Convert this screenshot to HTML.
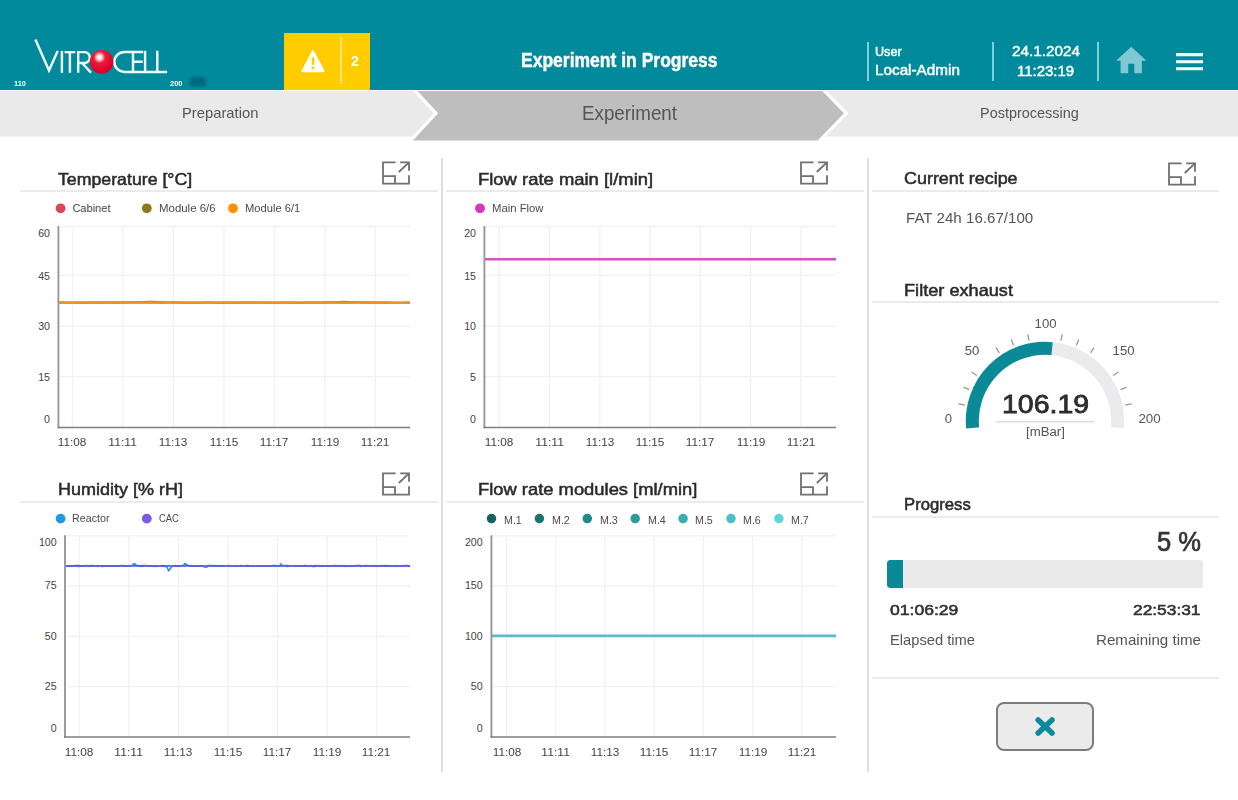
<!DOCTYPE html>
<html lang="en"><head><meta charset="utf-8"><title>Experiment in Progress</title>
<style>
*{margin:0;padding:0;box-sizing:border-box}
html,body{width:1238px;height:800px;overflow:hidden;background:#fff;font-family:"Liberation Sans",sans-serif}
.abs{position:absolute}
.t{position:absolute;white-space:pre;line-height:1;display:block}
#hdr{position:absolute;left:0;top:0;width:1238px;height:89.5px;background:#008a9b}
.vdiv{position:absolute;top:41.8px;height:38.8px;width:2px;background:#7fd0da}
#alert{position:absolute;left:283.5px;top:33px;width:86.5px;height:56.5px;background:#ffcc00}
#alert i{position:absolute;left:56.6px;top:4px;width:1.8px;height:47px;background:#ffe47a}
#nav{position:absolute;left:0;top:90.5px;width:1238px;height:50px}
.hl{position:absolute;height:1.8px;background:#ebebed}
.vl{position:absolute;width:1.6px;background:#dedee0}
#bar{position:absolute;left:887px;top:559.7px;width:316px;height:28.8px;background:#e9e9e9;border-radius:3px;overflow:hidden}
#bar b{position:absolute;left:0;top:0;width:16.3px;height:100%;background:#0a8a97;border-radius:3px 0 0 3px}
#close{position:absolute;left:996.3px;top:702.1px;width:97.6px;height:49px;border:2px solid #7c7c7c;border-radius:8px;background:#ebebeb}
</style></head>
<body>
<div id="hdr">
<svg class="abs" style="left:0;top:0" width="240" height="90" viewBox="0 0 240 90">
 <defs><radialGradient id="ball" cx="0.41" cy="0.31" r="0.72"><stop offset="0" stop-color="#ffffff"/><stop offset="0.1" stop-color="#fff0f1"/><stop offset="0.2" stop-color="#f9a3ad"/><stop offset="0.34" stop-color="#ea1c3a"/><stop offset="0.75" stop-color="#e3042b"/><stop offset="1" stop-color="#d00026"/></radialGradient>
 <filter id="bl" x="-30%" y="-30%" width="160%" height="160%"><feGaussianBlur stdDeviation="1.1"/></filter></defs>
 <g fill="none" stroke="#efffff" stroke-width="2.45" stroke-linecap="butt" stroke-linejoin="miter">
  <path d="M35.4 39.5L49 70.4L57.7 51"/>
  <path d="M61.9 50.9V72.8"/>
  <path d="M64.6 52.1H75.3M69.9 52.1V72.8"/>
  <path d="M78.2 72.8V52.1H84.4A5.4 5.45 0 0 1 84.4 63H79M82.2 63L91 72.8"/>
  <path d="M132.6 51.9H124.6A10.3 10 0 0 0 124.6 71.9H133"/>
  <path d="M143.2 51.9H133V71.9H167.1M133 61.7H142.7"/>
  <path d="M145.1 50.8V71.9"/>
  <path d="M157.3 50.8V71.9"/>
 </g>
 <circle cx="101.6" cy="61.8" r="11.8" fill="url(#ball)"/>
 <rect x="189.8" y="76.8" width="16" height="10" rx="4" fill="#056a7d" filter="url(#bl)"/>
</svg>
<div id="alert"><i></i>
<svg class="abs" style="left:15px;top:14px" width="30" height="28" viewBox="0 0 30 28"><path d="M14 4L3.2 24.3H24.8Z" fill="#fff" stroke="#fff" stroke-width="1.8" stroke-linejoin="round"/><rect x="12.7" y="10.6" width="2.6" height="7.2" fill="#ffcc00"/><rect x="12.7" y="19.6" width="2.6" height="2.6" fill="#ffcc00"/></svg>
</div>
<div class="vdiv" style="left:867px"></div><div class="vdiv" style="left:991.5px"></div><div class="vdiv" style="left:1097px"></div>
<svg class="abs" style="left:1113.3px;top:42.4px" width="36.5" height="37.4" viewBox="0 0 24 24" preserveAspectRatio="none"><path d="M10 20v-6h4v6h5v-8h3L12 3 2 12h3v8z" fill="#80c9d4"/></svg>
<svg class="abs" style="left:1175.5px;top:52.6px" width="27" height="18" viewBox="0 0 27 18"><path d="M0 1.6H27M0 8.7H27M0 15.8H27" stroke="#f4ffff" stroke-width="3.1"/></svg>
</div>
<div id="nav"><svg width="1238" height="50" viewBox="0 90.5 1238 50">
 <rect x="0" y="90.5" width="1238" height="45.5" fill="#eaeaea"/>
 <path d="M413.9 89L436 112.8L409.2 141.6H818.3L846.2 112.8L823.1 89Z" fill="#bebebe" stroke="#fff" stroke-width="3.2" stroke-linejoin="miter"/>
</svg></div>

<div class="hl" style="left:20px;top:190.2px;width:418px"></div>
<div class="hl" style="left:446px;top:190.2px;width:418px"></div>
<div class="hl" style="left:872px;top:190.2px;width:347px"></div>
<div class="hl" style="left:20px;top:501px;width:418px"></div>
<div class="hl" style="left:446px;top:501px;width:418px"></div>
<div class="hl" style="left:872px;top:301px;width:347px"></div>
<div class="hl" style="left:872px;top:515.8px;width:347px"></div>
<div class="hl" style="left:872px;top:677px;width:347px"></div>
<div class="vl" style="left:441.3px;top:158px;height:614px"></div>
<div class="vl" style="left:867.4px;top:158px;height:614px"></div>

<svg class="abs" style="left:0;top:0" width="1238" height="800" viewBox="0 0 1238 800">
<line x1="58.4" x2="410" y1="226.5" y2="226.5" stroke="#f2f1f4" stroke-width="1.3"/>
<line x1="58.4" x2="410" y1="275.4" y2="275.4" stroke="#f2f1f4" stroke-width="1.3"/>
<line x1="58.4" x2="410" y1="326.1" y2="326.1" stroke="#f2f1f4" stroke-width="1.3"/>
<line x1="58.4" x2="410" y1="376.7" y2="376.7" stroke="#f2f1f4" stroke-width="1.3"/>
<line x1="72.4" x2="72.4" y1="226.5" y2="427.5" stroke="#f2f1f4" stroke-width="1.3"/>
<line x1="122.9" x2="122.9" y1="226.5" y2="427.5" stroke="#f2f1f4" stroke-width="1.3"/>
<line x1="173.4" x2="173.4" y1="226.5" y2="427.5" stroke="#f2f1f4" stroke-width="1.3"/>
<line x1="223.9" x2="223.9" y1="226.5" y2="427.5" stroke="#f2f1f4" stroke-width="1.3"/>
<line x1="274.4" x2="274.4" y1="226.5" y2="427.5" stroke="#f2f1f4" stroke-width="1.3"/>
<line x1="324.9" x2="324.9" y1="226.5" y2="427.5" stroke="#f2f1f4" stroke-width="1.3"/>
<line x1="375.4" x2="375.4" y1="226.5" y2="427.5" stroke="#f2f1f4" stroke-width="1.3"/>
<path d="M58.4 302.56L66.4 302.53L74.4 302.63L82.4 302.51L90.4 302.61L98.4 302.57L106.4 302.51L114.4 302.60L122.4 302.51L130.4 302.59L138.4 302.51L146.4 302.52L154.4 302.58L162.4 302.67L170.4 302.52L178.4 302.54L186.4 302.63L194.4 302.69L202.4 302.62L210.4 302.58L218.4 302.70L226.4 302.51L234.4 302.67L242.4 302.56L250.4 302.53L258.4 302.52L266.4 302.56L274.4 302.66L282.4 302.54L290.4 302.62L298.4 302.63L306.4 302.57L314.4 302.61L322.4 302.51L330.4 302.51L338.4 302.54L346.4 302.64L354.4 302.59L362.4 302.56L370.4 302.62L378.4 302.59L386.4 302.56L394.4 302.66L402.4 302.64L410.0 302.55" fill="none" stroke="#8c7a1f" stroke-width="2"/>
<path d="M58.4 302.71L63.4 302.71L68.4 302.78L73.4 302.75L78.4 302.66L83.4 302.80L88.4 302.62L93.4 302.68L98.4 302.75L103.4 302.61L108.4 302.66L113.4 302.52L118.4 302.57L123.4 302.47L128.4 302.26L133.4 302.13L138.4 301.84L143.4 301.78L148.4 301.72L153.4 301.77L158.4 301.89L163.4 302.16L168.4 302.37L173.4 302.43L178.4 302.58L183.4 302.54L188.4 302.71L193.4 302.72L198.4 302.79L203.4 302.76L208.4 302.66L213.4 302.68L218.4 302.73L223.4 302.60L228.4 302.69L233.4 302.63L238.4 302.62L243.4 302.61L248.4 302.75L253.4 302.63L258.4 302.65L263.4 302.68L268.4 302.77L273.4 302.62L278.4 302.69L283.4 302.71L288.4 302.78L293.4 302.76L298.4 302.77L303.4 302.65L308.4 302.67L313.4 302.63L318.4 302.68L323.4 302.58L328.4 302.25L333.4 302.04L338.4 301.86L343.4 301.75L348.4 301.83L353.4 301.99L358.4 302.14L363.4 302.28L368.4 302.52L373.4 302.60L378.4 302.68L383.4 302.78L388.4 302.74L393.4 302.70L398.4 302.72L403.4 302.74L408.4 302.61L410.0 302.78" fill="none" stroke="#e06a3c" stroke-width="1.8"/>
<path d="M58.4 302.77L66.4 302.79L74.4 302.77L82.4 302.67L90.4 302.68L98.4 302.60L106.4 302.73L114.4 302.59L122.4 302.60L130.4 302.63L138.4 302.62L146.4 302.66L154.4 302.59L162.4 302.58L170.4 302.62L178.4 302.60L186.4 302.67L194.4 302.59L202.4 302.79L210.4 302.73L218.4 302.62L226.4 302.64L234.4 302.66L242.4 302.67L250.4 302.61L258.4 302.78L266.4 302.82L274.4 302.69L282.4 302.70L290.4 302.60L298.4 302.60L306.4 302.66L314.4 302.64L322.4 302.78L330.4 302.62L338.4 302.59L346.4 302.81L354.4 302.71L362.4 302.62L370.4 302.71L378.4 302.59L386.4 302.71L394.4 302.81L402.4 302.79L410.0 302.75" fill="none" stroke="#ee9328" stroke-width="2.3"/>
<path d="M58.4 226.0V428.2" fill="none" stroke="#989898" stroke-width="1.9"/>
<path d="M57.5 427.5H410" fill="none" stroke="#7e7e7e" stroke-width="1.45"/>
<line x1="484.4" x2="836" y1="226.5" y2="226.5" stroke="#f2f1f4" stroke-width="1.3"/>
<line x1="484.4" x2="836" y1="275.4" y2="275.4" stroke="#f2f1f4" stroke-width="1.3"/>
<line x1="484.4" x2="836" y1="326.1" y2="326.1" stroke="#f2f1f4" stroke-width="1.3"/>
<line x1="484.4" x2="836" y1="376.7" y2="376.7" stroke="#f2f1f4" stroke-width="1.3"/>
<line x1="499.3" x2="499.3" y1="226.5" y2="427.5" stroke="#f2f1f4" stroke-width="1.3"/>
<line x1="549.5" x2="549.5" y1="226.5" y2="427.5" stroke="#f2f1f4" stroke-width="1.3"/>
<line x1="599.8" x2="599.8" y1="226.5" y2="427.5" stroke="#f2f1f4" stroke-width="1.3"/>
<line x1="650.0" x2="650.0" y1="226.5" y2="427.5" stroke="#f2f1f4" stroke-width="1.3"/>
<line x1="700.3" x2="700.3" y1="226.5" y2="427.5" stroke="#f2f1f4" stroke-width="1.3"/>
<line x1="750.5" x2="750.5" y1="226.5" y2="427.5" stroke="#f2f1f4" stroke-width="1.3"/>
<line x1="800.8" x2="800.8" y1="226.5" y2="427.5" stroke="#f2f1f4" stroke-width="1.3"/>
<path d="M484.4 259.3H836" fill="none" stroke="#d94fc8" stroke-width="2.4"/>
<path d="M484.4 226.0V428.2" fill="none" stroke="#989898" stroke-width="1.9"/>
<path d="M483.5 427.5H836" fill="none" stroke="#7e7e7e" stroke-width="1.45"/>
<line x1="65" x2="410" y1="535.8" y2="535.8" stroke="#f2f1f4" stroke-width="1.3"/>
<line x1="65" x2="410" y1="586.1" y2="586.1" stroke="#f2f1f4" stroke-width="1.3"/>
<line x1="65" x2="410" y1="636.4" y2="636.4" stroke="#f2f1f4" stroke-width="1.3"/>
<line x1="65" x2="410" y1="686.7" y2="686.7" stroke="#f2f1f4" stroke-width="1.3"/>
<line x1="79.5" x2="79.5" y1="535.8" y2="737" stroke="#f2f1f4" stroke-width="1.3"/>
<line x1="129.0" x2="129.0" y1="535.8" y2="737" stroke="#f2f1f4" stroke-width="1.3"/>
<line x1="178.5" x2="178.5" y1="535.8" y2="737" stroke="#f2f1f4" stroke-width="1.3"/>
<line x1="228.0" x2="228.0" y1="535.8" y2="737" stroke="#f2f1f4" stroke-width="1.3"/>
<line x1="277.5" x2="277.5" y1="535.8" y2="737" stroke="#f2f1f4" stroke-width="1.3"/>
<line x1="327.0" x2="327.0" y1="535.8" y2="737" stroke="#f2f1f4" stroke-width="1.3"/>
<line x1="376.5" x2="376.5" y1="535.8" y2="737" stroke="#f2f1f4" stroke-width="1.3"/>
<path d="M65.0 565.86L66.5 565.92L68.0 565.80L69.5 566.16L71.0 566.02L72.5 566.17L74.0 565.90L75.5 565.83L77.0 566.19L78.5 566.29L80.0 566.21L81.5 566.18L83.0 566.19L84.5 566.14L86.0 565.84L87.5 566.01L89.0 565.91L90.5 565.72L92.0 565.72L93.5 565.87L95.0 565.86L96.5 566.12L98.0 566.27L99.5 565.97L101.0 566.26L102.5 566.29L104.0 566.27L105.5 565.92L107.0 565.83L108.5 565.84L110.0 565.82L111.5 565.82L113.0 566.07L114.5 566.24L116.0 566.20L117.5 565.99L119.0 566.09L120.5 566.18L122.0 565.75L123.5 566.10L125.0 566.25L126.5 566.17L128.0 566.15L129.5 565.99L131.0 565.74L132.5 565.39L134.0 563.62L135.5 564.53L137.0 565.99L138.5 565.92L140.0 565.94L141.5 566.27L143.0 566.13L144.5 565.80L146.0 565.78L147.5 565.79L149.0 566.24L150.5 566.18L152.0 565.79L153.5 566.20L155.0 566.29L156.5 566.09L158.0 565.91L159.5 566.03L161.0 565.78L162.5 565.71L164.0 566.28L165.5 566.13L167.0 567.02L168.5 570.61L170.0 569.21L171.5 566.64L173.0 566.20L174.5 565.83L176.0 565.85L177.5 565.88L179.0 565.84L180.5 566.05L182.0 565.81L183.5 565.34L185.0 563.63L186.5 564.38L188.0 565.51L189.5 565.95L191.0 566.05L192.5 566.24L194.0 565.95L195.5 566.25L197.0 566.00L198.5 566.02L200.0 566.01L201.5 565.72L203.0 566.18L204.5 566.91L206.0 567.09L207.5 566.62L209.0 565.84L210.5 565.98L212.0 566.14L213.5 566.03L215.0 565.90L216.5 566.01L218.0 566.03L219.5 566.17L221.0 565.76L222.5 566.04L224.0 565.85L225.5 565.87L227.0 566.16L228.5 566.00L230.0 566.04L231.5 566.16L233.0 566.25L234.5 565.97L236.0 566.07L237.5 566.00L239.0 566.01L240.5 566.12L242.0 565.97L243.5 566.02L245.0 565.99L246.5 566.26L248.0 566.12L249.5 566.23L251.0 566.27L252.5 565.86L254.0 566.04L255.5 566.27L257.0 566.20L258.5 565.78L260.0 565.77L261.5 565.97L263.0 565.74L264.5 565.84L266.0 565.74L267.5 566.10L269.0 566.17L270.5 566.24L272.0 565.79L273.5 566.13L275.0 566.10L276.5 565.79L278.0 566.23L279.5 566.11L281.0 564.23L282.5 566.10L284.0 565.94L285.5 565.99L287.0 566.29L288.5 566.20L290.0 565.80L291.5 565.96L293.0 566.01L294.5 565.90L296.0 565.82L297.5 565.89L299.0 566.13L300.5 565.71L302.0 566.03L303.5 565.96L305.0 565.71L306.5 565.90L308.0 566.07L309.5 566.01L311.0 565.74L312.5 566.29L314.0 566.17L315.5 566.28L317.0 565.76L318.5 565.86L320.0 565.72L321.5 566.17L323.0 565.86L324.5 565.78L326.0 565.95L327.5 566.25L329.0 566.19L330.5 565.86L332.0 565.79L333.5 566.25L335.0 566.04L336.5 566.12L338.0 565.75L339.5 565.73L341.0 566.11L342.5 565.96L344.0 565.74L345.5 566.26L347.0 566.08L348.5 566.18L350.0 565.75L351.5 566.21L353.0 565.74L354.5 566.22L356.0 565.97L357.5 565.90L359.0 566.03L360.5 566.26L362.0 565.86L363.5 565.78L365.0 566.02L366.5 565.84L368.0 565.77L369.5 565.80L371.0 565.73L372.5 565.82L374.0 565.89L375.5 565.88L377.0 566.16L378.5 565.87L380.0 566.00L381.5 565.81L383.0 565.91L384.5 565.71L386.0 565.85L387.5 565.71L389.0 566.14L390.5 566.03L392.0 565.81L393.5 565.98L395.0 566.26L396.5 565.76L398.0 566.19L399.5 565.96L401.0 566.00L402.5 566.20L404.0 565.94L405.5 566.00L407.0 566.11L408.5 566.29L410.0 565.91" fill="none" stroke="#1e9be0" stroke-width="1.7"/>
<path d="M65.0 566.07L67.0 566.00L69.0 565.97L71.0 565.85L73.0 565.82L75.0 565.68L77.0 565.71L79.0 565.69L81.0 566.02L83.0 565.78L85.0 565.73L87.0 565.69L89.0 566.07L91.0 566.09L93.0 565.99L95.0 565.79L97.0 565.77L99.0 565.80L101.0 565.88L103.0 565.73L105.0 565.87L107.0 565.78L109.0 566.13L111.0 566.14L113.0 565.92L115.0 565.77L117.0 566.13L119.0 565.80L121.0 565.83L123.0 565.65L125.0 565.84L127.0 565.89L129.0 565.90L131.0 565.75L133.0 565.90L135.0 565.65L137.0 565.78L139.0 565.69L141.0 565.85L143.0 565.67L145.0 565.66L147.0 565.80L149.0 565.77L151.0 565.94L153.0 565.91L155.0 566.03L157.0 565.98L159.0 566.01L161.0 566.09L163.0 565.84L165.0 565.81L167.0 566.14L169.0 565.72L171.0 566.01L173.0 565.97L175.0 565.67L177.0 566.07L179.0 566.10L181.0 565.96L183.0 566.02L185.0 566.06L187.0 565.72L189.0 565.91L191.0 565.90L193.0 566.07L195.0 566.05L197.0 566.06L199.0 565.94L201.0 566.10L203.0 565.99L205.0 566.00L207.0 565.76L209.0 565.67L211.0 565.72L213.0 565.83L215.0 565.70L217.0 566.07L219.0 565.93L221.0 565.96L223.0 565.96L225.0 565.99L227.0 565.89L229.0 565.65L231.0 566.05L233.0 566.02L235.0 565.90L237.0 565.92L239.0 565.98L241.0 565.68L243.0 566.02L245.0 565.78L247.0 565.69L249.0 565.78L251.0 566.01L253.0 565.75L255.0 566.02L257.0 566.14L259.0 565.90L261.0 565.84L263.0 565.89L265.0 565.99L267.0 566.03L269.0 565.96L271.0 565.97L273.0 565.69L275.0 565.72L277.0 565.78L279.0 566.02L281.0 565.80L283.0 565.93L285.0 565.66L287.0 565.68L289.0 565.78L291.0 565.99L293.0 566.00L295.0 565.99L297.0 565.80L299.0 565.91L301.0 565.88L303.0 565.88L305.0 565.71L307.0 566.10L309.0 565.75L311.0 566.14L313.0 566.12L315.0 565.66L317.0 565.88L319.0 566.06L321.0 566.13L323.0 565.87L325.0 565.78L327.0 565.75L329.0 566.12L331.0 565.76L333.0 565.94L335.0 565.72L337.0 565.91L339.0 566.13L341.0 565.72L343.0 566.06L345.0 565.90L347.0 566.09L349.0 566.00L351.0 565.77L353.0 566.10L355.0 565.89L357.0 565.66L359.0 565.65L361.0 565.90L363.0 565.88L365.0 565.80L367.0 565.72L369.0 565.82L371.0 565.81L373.0 566.07L375.0 565.65L377.0 566.03L379.0 566.07L381.0 565.71L383.0 566.11L385.0 566.01L387.0 566.10L389.0 565.79L391.0 565.84L393.0 565.85L395.0 566.15L397.0 565.94L399.0 565.83L401.0 565.86L403.0 565.79L405.0 565.67L407.0 565.70L409.0 566.07L410.0 565.79" fill="none" stroke="#6459de" stroke-width="1.7"/>
<path d="M65 535.3V737.7" fill="none" stroke="#989898" stroke-width="1.9"/>
<path d="M64.1 737H410" fill="none" stroke="#7e7e7e" stroke-width="1.45"/>
<line x1="491.4" x2="836" y1="535.8" y2="535.8" stroke="#f2f1f4" stroke-width="1.3"/>
<line x1="491.4" x2="836" y1="586.1" y2="586.1" stroke="#f2f1f4" stroke-width="1.3"/>
<line x1="491.4" x2="836" y1="636.4" y2="636.4" stroke="#f2f1f4" stroke-width="1.3"/>
<line x1="491.4" x2="836" y1="686.7" y2="686.7" stroke="#f2f1f4" stroke-width="1.3"/>
<line x1="506.6" x2="506.6" y1="535.8" y2="737" stroke="#f2f1f4" stroke-width="1.3"/>
<line x1="555.8" x2="555.8" y1="535.8" y2="737" stroke="#f2f1f4" stroke-width="1.3"/>
<line x1="605.0" x2="605.0" y1="535.8" y2="737" stroke="#f2f1f4" stroke-width="1.3"/>
<line x1="654.2" x2="654.2" y1="535.8" y2="737" stroke="#f2f1f4" stroke-width="1.3"/>
<line x1="703.4" x2="703.4" y1="535.8" y2="737" stroke="#f2f1f4" stroke-width="1.3"/>
<line x1="752.6" x2="752.6" y1="535.8" y2="737" stroke="#f2f1f4" stroke-width="1.3"/>
<line x1="801.8" x2="801.8" y1="535.8" y2="737" stroke="#f2f1f4" stroke-width="1.3"/>
<path d="M491.4 635.8H836" fill="none" stroke="#4fc0cb" stroke-width="2.7"/>
<path d="M491.4 535.3V737.7" fill="none" stroke="#989898" stroke-width="1.9"/>
<path d="M490.5 737H836" fill="none" stroke="#7e7e7e" stroke-width="1.45"/>
<circle cx="60.6" cy="208.3" r="4.9" fill="#d9475c"/><circle cx="146.8" cy="208.3" r="4.9" fill="#8c7a1f"/><circle cx="233" cy="208.3" r="4.9" fill="#ff9000"/><circle cx="480" cy="208.3" r="4.9" fill="#d633c0"/><circle cx="60.6" cy="518.6" r="4.9" fill="#1e9be0"/><circle cx="146.8" cy="518.6" r="4.9" fill="#7b5be0"/><circle cx="491.5" cy="518.6" r="4.75" fill="#14635f"/><circle cx="539.4" cy="518.6" r="4.75" fill="#1a7571"/><circle cx="587.3" cy="518.6" r="4.75" fill="#1f8a88"/><circle cx="635.2" cy="518.6" r="4.75" fill="#2a9d9a"/><circle cx="683.1" cy="518.6" r="4.75" fill="#38aeae"/><circle cx="731.0" cy="518.6" r="4.75" fill="#4dbfc9"/><circle cx="778.9" cy="518.6" r="4.75" fill="#5fd4dd"/>
<path d="M972.63 427.97A72.7 72.7 0 1 1 1117.37 427.97" fill="none" stroke="#ebebed" stroke-width="13.0"/>
<path d="M972.63 427.97A72.7 72.7 0 0 1 1052.06 348.64" fill="none" stroke="#0a8a97" stroke-width="13.0"/>
<line x1="964.58" y1="405.00" x2="958.40" y2="403.77" stroke="#9a9a9a" stroke-width="1.3"/>
<line x1="969.24" y1="389.62" x2="963.42" y2="387.21" stroke="#9a9a9a" stroke-width="1.3"/>
<line x1="976.82" y1="375.44" x2="971.58" y2="371.94" stroke="#9a9a9a" stroke-width="1.3"/>
<line x1="999.44" y1="352.82" x2="995.94" y2="347.58" stroke="#9a9a9a" stroke-width="1.3"/>
<line x1="1013.62" y1="345.24" x2="1011.21" y2="339.42" stroke="#9a9a9a" stroke-width="1.3"/>
<line x1="1029.00" y1="340.58" x2="1027.77" y2="334.40" stroke="#9a9a9a" stroke-width="1.3"/>
<line x1="1061.00" y1="340.58" x2="1062.23" y2="334.40" stroke="#9a9a9a" stroke-width="1.3"/>
<line x1="1076.38" y1="345.24" x2="1078.79" y2="339.42" stroke="#9a9a9a" stroke-width="1.3"/>
<line x1="1090.56" y1="352.82" x2="1094.06" y2="347.58" stroke="#9a9a9a" stroke-width="1.3"/>
<line x1="1113.18" y1="375.44" x2="1118.42" y2="371.94" stroke="#9a9a9a" stroke-width="1.3"/>
<line x1="1120.76" y1="389.62" x2="1126.58" y2="387.21" stroke="#9a9a9a" stroke-width="1.3"/>
<line x1="1125.42" y1="405.00" x2="1131.60" y2="403.77" stroke="#9a9a9a" stroke-width="1.3"/>
<line x1="995.6" x2="1094.3" y1="421.8" y2="421.8" stroke="#dedede" stroke-width="1.6"/>
</svg>
<svg class="abs" style="left:382px;top:161px" width="29" height="25" viewBox="0 0 29 25" fill="none" stroke="#707070" stroke-width="1.8"><path d="M13.6 1.3H1V22.7H27V14.2"/><path d="M1 15.2H13V22.7"/><path d="M18.2 1.3H27V9.8"/><path d="M27 1.3L16.8 11"/></svg><svg class="abs" style="left:799.8px;top:161px" width="29" height="25" viewBox="0 0 29 25" fill="none" stroke="#707070" stroke-width="1.8"><path d="M13.6 1.3H1V22.7H27V14.2"/><path d="M1 15.2H13V22.7"/><path d="M18.2 1.3H27V9.8"/><path d="M27 1.3L16.8 11"/></svg><svg class="abs" style="left:382px;top:471.6px" width="29" height="25" viewBox="0 0 29 25" fill="none" stroke="#707070" stroke-width="1.8"><path d="M13.6 1.3H1V22.7H27V14.2"/><path d="M1 15.2H13V22.7"/><path d="M18.2 1.3H27V9.8"/><path d="M27 1.3L16.8 11"/></svg><svg class="abs" style="left:799.8px;top:471.6px" width="29" height="25" viewBox="0 0 29 25" fill="none" stroke="#707070" stroke-width="1.8"><path d="M13.6 1.3H1V22.7H27V14.2"/><path d="M1 15.2H13V22.7"/><path d="M18.2 1.3H27V9.8"/><path d="M27 1.3L16.8 11"/></svg><svg class="abs" style="left:1168.4px;top:161.6px" width="29" height="25" viewBox="0 0 29 25" fill="none" stroke="#707070" stroke-width="1.8"><path d="M13.6 1.3H1V22.7H27V14.2"/><path d="M1 15.2H13V22.7"/><path d="M18.2 1.3H27V9.8"/><path d="M27 1.3L16.8 11"/></svg>
<div id="bar"><b></b></div>
<div id="close"><svg class="abs" style="left:34px;top:10px" width="28" height="26" viewBox="0 0 28 26"><path d="M6.2 5.9L20 19M20 5.9L6.2 19" stroke="#0a8a9b" stroke-width="5.5" stroke-linecap="round"/></svg></div>
<span class="t" style="left:520.60px;top:50.00px;font-size:20.35px;color:#fff;font-weight:bold;transform:scaleX(0.8608);transform-origin:left top;-webkit-text-stroke:0.45px #fff;">Experiment in Progress</span>
<span class="t" style="left:875.10px;top:45.00px;font-size:13.08px;color:#fff;transform:scaleX(0.9629);transform-origin:left top;-webkit-text-stroke:0.5px #fff;">User</span>
<span class="t" style="left:875.30px;top:64.00px;font-size:13.81px;color:#fff;transform:scaleX(1.1071);transform-origin:left top;-webkit-text-stroke:0.45px #fff;">Local-Admin</span>
<span class="t" style="left:1011.60px;top:44.00px;font-size:14.1px;color:#fff;transform:scaleX(1.0829);transform-origin:left top;-webkit-text-stroke:0.45px #fff;">24.1.2024</span>
<span class="t" style="left:1017.00px;top:64.00px;font-size:14.1px;color:#fff;transform:scaleX(1.0626);transform-origin:left top;-webkit-text-stroke:0.45px #fff;">11:23:19</span>
<span class="t" style="left:351.20px;top:54.00px;font-size:14.24px;color:#fff;font-weight:bold;transform:scaleX(0.9846);transform-origin:left top;">2</span>
<span class="t" style="left:14.00px;top:81.00px;font-size:7.12px;color:#fff;font-weight:bold;transform:scaleX(1.0449);transform-origin:left top;">110</span>
<span class="t" style="left:169.60px;top:81.00px;font-size:7.12px;color:#fff;font-weight:bold;transform:scaleX(1.0442);transform-origin:left top;">200</span>
<span class="t" style="left:181.50px;top:105.00px;font-size:15.12px;color:#555;transform:scaleX(0.9779);transform-origin:left top;">Preparation</span>
<span class="t" style="left:582.30px;top:104.00px;font-size:19.48px;color:#555;transform:scaleX(0.9648);transform-origin:left top;">Experiment</span>
<span class="t" style="left:979.60px;top:105.00px;font-size:15.12px;color:#555;transform:scaleX(0.9563);transform-origin:left top;">Postprocessing</span>
<span class="t" style="left:58.30px;top:171.00px;font-size:16.28px;color:#2a2a2a;transform:scaleX(1.0899);transform-origin:left top;-webkit-text-stroke:0.5px #2a2a2a;">Temperature [°C]</span>
<span class="t" style="left:478.20px;top:171.00px;font-size:16.28px;color:#2a2a2a;transform:scaleX(1.1328);transform-origin:left top;-webkit-text-stroke:0.5px #2a2a2a;">Flow rate main [l/min]</span>
<span class="t" style="left:58.30px;top:481.00px;font-size:16.28px;color:#2a2a2a;transform:scaleX(1.1063);transform-origin:left top;-webkit-text-stroke:0.5px #2a2a2a;">Humidity [% rH]</span>
<span class="t" style="left:478.20px;top:481.00px;font-size:16.28px;color:#2a2a2a;transform:scaleX(1.1289);transform-origin:left top;-webkit-text-stroke:0.5px #2a2a2a;">Flow rate modules [ml/min]</span>
<span class="t" style="left:904.30px;top:170.00px;font-size:16.28px;color:#2a2a2a;transform:scaleX(1.1022);transform-origin:left top;-webkit-text-stroke:0.5px #2a2a2a;">Current recipe</span>
<span class="t" style="left:904.30px;top:282.00px;font-size:16.28px;color:#2a2a2a;transform:scaleX(1.1163);transform-origin:left top;-webkit-text-stroke:0.5px #2a2a2a;">Filter exhaust</span>
<span class="t" style="left:904.20px;top:496.00px;font-size:16.28px;color:#2a2a2a;transform:scaleX(1.0262);transform-origin:left top;-webkit-text-stroke:0.5px #2a2a2a;">Progress</span>
<span class="t" style="left:905.80px;top:210.00px;font-size:15.41px;color:#555;transform:scaleX(0.9819);transform-origin:left top;">FAT 24h 16.67/100</span>
<span class="t" style="left:72.40px;top:203.00px;font-size:11.05px;color:#4a4a4a;">Cabinet</span>
<span class="t" style="left:158.70px;top:203.00px;font-size:11.05px;color:#4a4a4a;transform:scaleX(1.0353);transform-origin:left top;">Module 6/6</span>
<span class="t" style="left:245.00px;top:203.00px;font-size:11.05px;color:#4a4a4a;transform:scaleX(1.0115);transform-origin:left top;">Module 6/1</span>
<span class="t" style="left:491.90px;top:203.00px;font-size:11.05px;color:#4a4a4a;transform:scaleX(1.0230);transform-origin:left top;">Main Flow</span>
<span class="t" style="left:72.40px;top:513.00px;font-size:11.05px;color:#4a4a4a;transform:scaleX(0.9693);transform-origin:left top;">Reactor</span>
<span class="t" style="left:158.70px;top:513.00px;font-size:11.05px;color:#4a4a4a;transform:scaleX(0.8488);transform-origin:left top;">CAC</span>
<span class="t" style="left:503.80px;top:516.00px;font-size:10.17px;color:#4a4a4a;transform:scaleX(1.0509);transform-origin:left top;">M.1</span>
<span class="t" style="left:551.70px;top:516.00px;font-size:10.17px;color:#4a4a4a;transform:scaleX(1.0509);transform-origin:left top;">M.2</span>
<span class="t" style="left:599.60px;top:516.00px;font-size:10.17px;color:#4a4a4a;transform:scaleX(1.0509);transform-origin:left top;">M.3</span>
<span class="t" style="left:647.50px;top:516.00px;font-size:10.17px;color:#4a4a4a;transform:scaleX(1.0509);transform-origin:left top;">M.4</span>
<span class="t" style="left:695.40px;top:516.00px;font-size:10.17px;color:#4a4a4a;transform:scaleX(1.0509);transform-origin:left top;">M.5</span>
<span class="t" style="left:743.30px;top:516.00px;font-size:10.17px;color:#4a4a4a;transform:scaleX(1.0509);transform-origin:left top;">M.6</span>
<span class="t" style="left:791.20px;top:516.00px;font-size:10.17px;color:#4a4a4a;transform:scaleX(1.0509);transform-origin:left top;">M.7</span>
<span class="t" style="left:38.19px;top:228.00px;font-size:10.61px;color:#444;">60</span>
<span class="t" style="left:38.19px;top:271.00px;font-size:10.61px;color:#444;">45</span>
<span class="t" style="left:38.19px;top:321.00px;font-size:10.61px;color:#444;">30</span>
<span class="t" style="left:38.19px;top:372.00px;font-size:10.61px;color:#444;">15</span>
<span class="t" style="left:44.09px;top:414.00px;font-size:10.61px;color:#444;">0</span>
<span class="t" style="left:464.19px;top:228.00px;font-size:10.61px;color:#444;">20</span>
<span class="t" style="left:464.19px;top:271.00px;font-size:10.61px;color:#444;">15</span>
<span class="t" style="left:464.19px;top:321.00px;font-size:10.61px;color:#444;">10</span>
<span class="t" style="left:470.09px;top:372.00px;font-size:10.61px;color:#444;">5</span>
<span class="t" style="left:470.09px;top:414.00px;font-size:10.61px;color:#444;">0</span>
<span class="t" style="left:38.90px;top:537.00px;font-size:10.61px;color:#444;">100</span>
<span class="t" style="left:44.79px;top:580.00px;font-size:10.61px;color:#444;">75</span>
<span class="t" style="left:44.79px;top:631.00px;font-size:10.61px;color:#444;">50</span>
<span class="t" style="left:44.79px;top:681.00px;font-size:10.61px;color:#444;">25</span>
<span class="t" style="left:50.69px;top:723.00px;font-size:10.61px;color:#444;">0</span>
<span class="t" style="left:464.90px;top:537.00px;font-size:10.61px;color:#444;">200</span>
<span class="t" style="left:464.90px;top:580.00px;font-size:10.61px;color:#444;">150</span>
<span class="t" style="left:464.90px;top:631.00px;font-size:10.61px;color:#444;">100</span>
<span class="t" style="left:470.79px;top:681.00px;font-size:10.61px;color:#444;">50</span>
<span class="t" style="left:476.69px;top:723.00px;font-size:10.61px;color:#444;">0</span>
<span class="t" style="left:59.35px;top:437.00px;font-size:10.76px;color:#444;transform:scaleX(1.0954);transform-origin:center top;">11:08</span>
<span class="t" style="left:110.24px;top:437.00px;font-size:10.76px;color:#444;transform:scaleX(1.1299);transform-origin:center top;">11:11</span>
<span class="t" style="left:160.35px;top:437.00px;font-size:10.76px;color:#444;transform:scaleX(1.0954);transform-origin:center top;">11:13</span>
<span class="t" style="left:210.85px;top:437.00px;font-size:10.76px;color:#444;transform:scaleX(1.0954);transform-origin:center top;">11:15</span>
<span class="t" style="left:261.35px;top:437.00px;font-size:10.76px;color:#444;transform:scaleX(1.0954);transform-origin:center top;">11:17</span>
<span class="t" style="left:311.85px;top:437.00px;font-size:10.76px;color:#444;transform:scaleX(1.0954);transform-origin:center top;">11:19</span>
<span class="t" style="left:362.35px;top:437.00px;font-size:10.76px;color:#444;transform:scaleX(1.0954);transform-origin:center top;">11:21</span>
<span class="t" style="left:486.25px;top:437.00px;font-size:10.76px;color:#444;transform:scaleX(1.0954);transform-origin:center top;">11:08</span>
<span class="t" style="left:536.89px;top:437.00px;font-size:10.76px;color:#444;transform:scaleX(1.1299);transform-origin:center top;">11:11</span>
<span class="t" style="left:586.75px;top:437.00px;font-size:10.76px;color:#444;transform:scaleX(1.0954);transform-origin:center top;">11:13</span>
<span class="t" style="left:637.00px;top:437.00px;font-size:10.76px;color:#444;transform:scaleX(1.0954);transform-origin:center top;">11:15</span>
<span class="t" style="left:687.25px;top:437.00px;font-size:10.76px;color:#444;transform:scaleX(1.0954);transform-origin:center top;">11:17</span>
<span class="t" style="left:737.50px;top:437.00px;font-size:10.76px;color:#444;transform:scaleX(1.0954);transform-origin:center top;">11:19</span>
<span class="t" style="left:787.75px;top:437.00px;font-size:10.76px;color:#444;transform:scaleX(1.0954);transform-origin:center top;">11:21</span>
<span class="t" style="left:66.45px;top:747.00px;font-size:10.76px;color:#444;transform:scaleX(1.0954);transform-origin:center top;">11:08</span>
<span class="t" style="left:116.34px;top:747.00px;font-size:10.76px;color:#444;transform:scaleX(1.1299);transform-origin:center top;">11:11</span>
<span class="t" style="left:165.45px;top:747.00px;font-size:10.76px;color:#444;transform:scaleX(1.0954);transform-origin:center top;">11:13</span>
<span class="t" style="left:214.95px;top:747.00px;font-size:10.76px;color:#444;transform:scaleX(1.0954);transform-origin:center top;">11:15</span>
<span class="t" style="left:264.45px;top:747.00px;font-size:10.76px;color:#444;transform:scaleX(1.0954);transform-origin:center top;">11:17</span>
<span class="t" style="left:313.95px;top:747.00px;font-size:10.76px;color:#444;transform:scaleX(1.0954);transform-origin:center top;">11:19</span>
<span class="t" style="left:363.45px;top:747.00px;font-size:10.76px;color:#444;transform:scaleX(1.0954);transform-origin:center top;">11:21</span>
<span class="t" style="left:493.55px;top:747.00px;font-size:10.76px;color:#444;transform:scaleX(1.0954);transform-origin:center top;">11:08</span>
<span class="t" style="left:543.14px;top:747.00px;font-size:10.76px;color:#444;transform:scaleX(1.1299);transform-origin:center top;">11:11</span>
<span class="t" style="left:591.95px;top:747.00px;font-size:10.76px;color:#444;transform:scaleX(1.0954);transform-origin:center top;">11:13</span>
<span class="t" style="left:641.15px;top:747.00px;font-size:10.76px;color:#444;transform:scaleX(1.0954);transform-origin:center top;">11:15</span>
<span class="t" style="left:690.35px;top:747.00px;font-size:10.76px;color:#444;transform:scaleX(1.0954);transform-origin:center top;">11:17</span>
<span class="t" style="left:739.55px;top:747.00px;font-size:10.76px;color:#444;transform:scaleX(1.0954);transform-origin:center top;">11:19</span>
<span class="t" style="left:788.75px;top:747.00px;font-size:10.76px;color:#444;transform:scaleX(1.0954);transform-origin:center top;">11:21</span>
<span class="t" style="left:944.88px;top:413.00px;font-size:12.65px;color:#555;transform:scaleX(1.0382);transform-origin:center top;">0</span>
<span class="t" style="left:964.67px;top:345.00px;font-size:12.65px;color:#555;transform:scaleX(1.0382);transform-origin:center top;">50</span>
<span class="t" style="left:1035.05px;top:318.00px;font-size:12.65px;color:#555;transform:scaleX(1.0430);transform-origin:center top;">100</span>
<span class="t" style="left:1112.75px;top:345.00px;font-size:12.65px;color:#555;transform:scaleX(1.0430);transform-origin:center top;">150</span>
<span class="t" style="left:1139.45px;top:413.00px;font-size:12.65px;color:#555;transform:scaleX(1.0572);transform-origin:center top;">200</span>
<span class="t" style="left:1001.90px;top:392.00px;font-size:25.87px;color:#2d2d2d;transform:scaleX(1.1012);transform-origin:left top;-webkit-text-stroke:0.8px #2d2d2d;">106.19</span>
<span class="t" style="left:1026.00px;top:426.00px;font-size:12.5px;color:#555;transform:scaleX(1.0567);transform-origin:left top;">[mBar]</span>
<span class="t" style="left:1156.90px;top:529.00px;font-size:26.74px;color:#333;transform:scaleX(0.9549);transform-origin:left top;-webkit-text-stroke:0.7px #333;">5 %</span>
<span class="t" style="left:889.90px;top:602.00px;font-size:15.12px;color:#2f2f2f;transform:scaleX(1.1627);transform-origin:left top;-webkit-text-stroke:0.55px #2f2f2f;">01:06:29</span>
<span class="t" style="left:1132.50px;top:602.00px;font-size:15.12px;color:#2f2f2f;transform:scaleX(1.1474);transform-origin:left top;-webkit-text-stroke:0.55px #2f2f2f;">22:53:31</span>
<span class="t" style="left:889.60px;top:632.00px;font-size:15.41px;color:#555;transform:scaleX(0.9544);transform-origin:left top;">Elapsed time</span>
<span class="t" style="left:1095.90px;top:632.00px;font-size:15.41px;color:#555;transform:scaleX(0.9809);transform-origin:left top;">Remaining time</span>
</body></html>
